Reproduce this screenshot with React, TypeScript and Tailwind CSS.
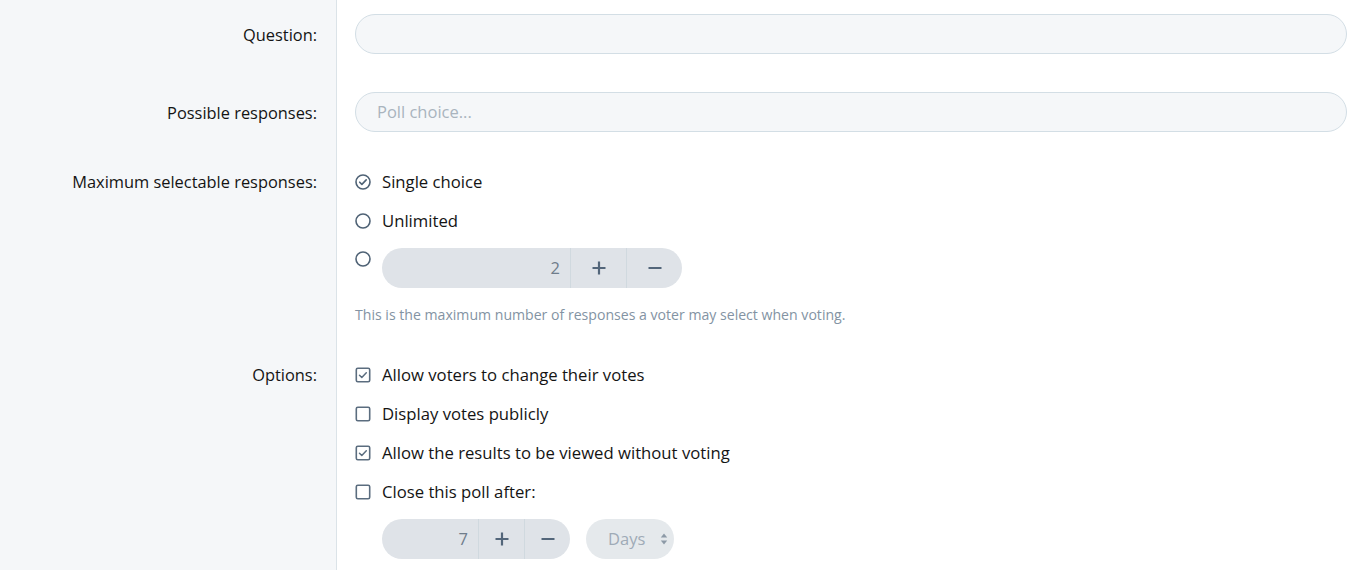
import React from 'react';

const font = { fontFamily: '"Open Sans", "Noto Sans", Arial, sans-serif' };

function RadioIcon({ checked }: { checked?: boolean }) {
  return (
    <svg width="16" height="16" viewBox="0 0 16 16" className="shrink-0">
      <circle cx="8" cy="8" r="7" fill="none" stroke="#4f6275" strokeWidth="1.6" />
      {checked && <path d="M4.7 8.2l2.2 2.2 4.3-4.5" fill="none" stroke="#4f6275" strokeWidth="1.6" strokeLinecap="round" strokeLinejoin="round" />}
    </svg>
  );
}

function CheckIcon({ checked }: { checked?: boolean }) {
  return (
    <svg width="16" height="16" viewBox="0 0 16 16" className="shrink-0">
      <rect x="1.3" y="1.3" width="13.4" height="13.4" rx="1.5" fill="none" stroke="#5b6d7f" strokeWidth="1.6" />
      {checked && <path d="M4.5 8.2l2.3 2.3 4.5-4.7" fill="none" stroke="#5b6d7f" strokeWidth="1.5" strokeLinecap="round" strokeLinejoin="round" />}
    </svg>
  );
}

function Spinner({ value, valueWidth, btnWidth }: { value: string; valueWidth: string; btnWidth: string }) {
  return (
    <div className="flex h-[40px] rounded-full bg-[#dfe3e8] overflow-hidden">
      <div className={`${valueWidth} flex items-center justify-end pr-[10px] text-[16.5px] text-[#6f7d8b]`}>{value}</div>
      <div className={`${btnWidth} flex items-center justify-center border-l border-[#d0d9df]`}>
        <svg width="16" height="16" viewBox="0 0 16 16">
          <path d="M8 1.5v13M1.5 8h13" stroke="#53667a" strokeWidth="2.2" />
        </svg>
      </div>
      <div className={`${btnWidth} flex items-center justify-center border-l border-[#d0d9df]`}>
        <svg width="16" height="16" viewBox="0 0 16 16">
          <path d="M1.5 8h13" stroke="#53667a" strokeWidth="2.2" />
        </svg>
      </div>
    </div>
  );
}

function Row({ label, labelPad, children, grow }: { label: string; labelPad: string; children: React.ReactNode; grow?: boolean }) {
  return (
    <div className={`flex ${grow ? 'flex-1' : ''}`}>
      <div className={`w-[337px] shrink-0 bg-[#f5f7f9] border-r border-[#dbe3e8] text-right pr-[19px] ${labelPad}`}>
        <span className="text-[16.4px] leading-[24px] text-[#141414]">{label}</span>
      </div>
      <div className="flex-1 pl-[18px] pr-[13px] pt-[14px] pb-[24px]">{children}</div>
    </div>
  );
}

export default function App() {
  return (
    <div className="flex flex-col h-[570px] overflow-hidden bg-white text-[#141414]" style={font}>
      <Row label="Question:" labelPad="pt-[23px]">
        <div className="h-[40px] rounded-full border border-[#d3dee5] bg-[#f5f7f9]" />
      </Row>
      <Row label="Possible responses:" labelPad="pt-[23px]">
        <div className="h-[40px] rounded-full border border-[#d3dee5] bg-[#f5f7f9] flex items-center px-[21px] text-[16.5px] text-[#a9b4be]">
          Poll choice...
        </div>
      </Row>
      <Row label="Maximum selectable responses:" labelPad="pt-[14px]">
        <div className="flex flex-col gap-[15px] text-[16.7px]">
          <label className="flex items-center gap-[11px] h-[24px]">
            <RadioIcon checked />
            <span>Single choice</span>
          </label>
          <label className="flex items-center gap-[11px] h-[24px]">
            <RadioIcon />
            <span>Unlimited</span>
          </label>
          <div className="flex items-start gap-[11px]">
            <div className="pt-[3px]">
              <RadioIcon />
            </div>
            <Spinner value="2" valueWidth="w-[188px]" btnWidth="w-[56px]" />
          </div>
        </div>
        <p className="mt-[17px] text-[14.1px] leading-[20px] text-[#8393a3]">
          This is the maximum number of responses a voter may select when voting.
        </p>
      </Row>
      <Row label="Options:" labelPad="pt-[14px]" grow>
        <div className="flex flex-col gap-[15px] text-[16.7px]">
          <label className="flex items-center gap-[11px] h-[24px]">
            <CheckIcon checked />
            <span>Allow voters to change their votes</span>
          </label>
          <label className="flex items-center gap-[11px] h-[24px]">
            <CheckIcon />
            <span>Display votes publicly</span>
          </label>
          <label className="flex items-center gap-[11px] h-[24px]">
            <CheckIcon checked />
            <span>Allow the results to be viewed without voting</span>
          </label>
          <label className="flex items-center gap-[11px] h-[24px]">
            <CheckIcon />
            <span>Close this poll after:</span>
          </label>
          <div className="flex items-center gap-[16px] pl-[27px]">
            <Spinner value="7" valueWidth="w-[96px]" btnWidth="w-[46px]" />
            <div className="h-[40px] w-[88px] rounded-full bg-[#e5e9ec] flex items-center justify-between pl-[22px] pr-[6px] text-[16.5px] text-[#9fabb7]">
              <span>Days</span>
              <svg width="8" height="14" viewBox="0 0 8 14">
                <path d="M4 1.5L7.2 5.5H0.8z" fill="#8d9aa7" />
                <path d="M4 12.5L7.2 8.5H0.8z" fill="#8d9aa7" />
              </svg>
            </div>
          </div>
        </div>
      </Row>
    </div>
  );
}
